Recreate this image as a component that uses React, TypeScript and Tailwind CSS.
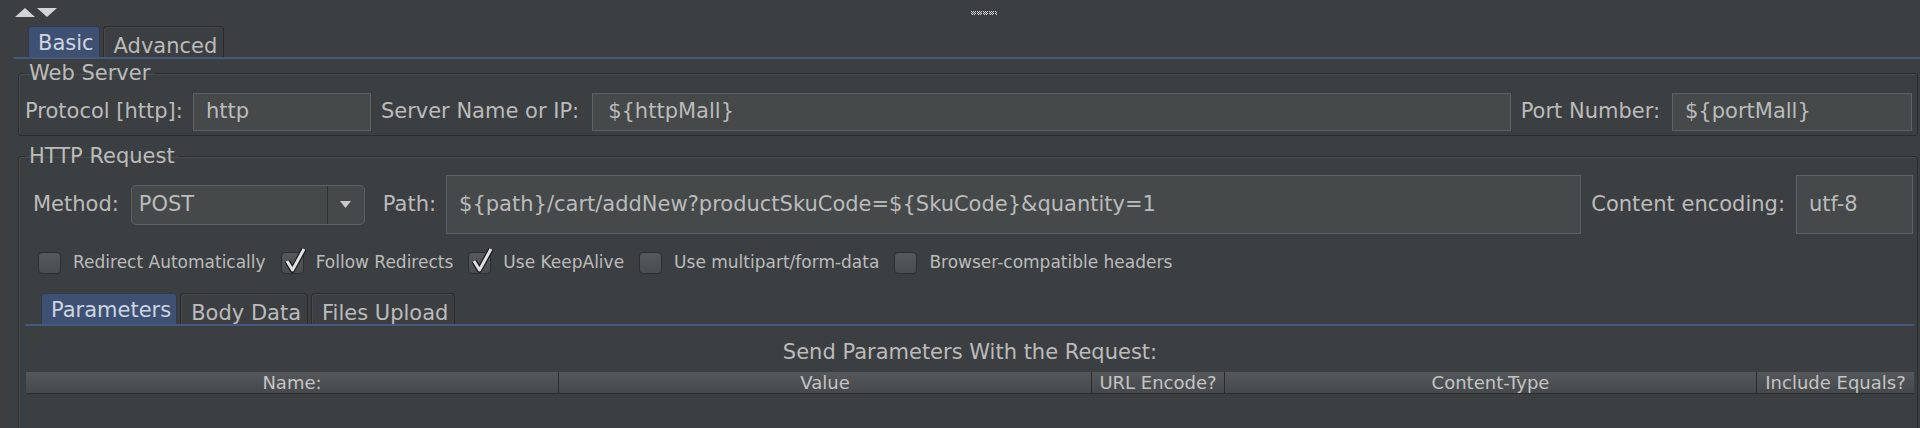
import type { ReactNode } from 'react';

function Tab({ label, active }: { label: string; active?: boolean }) {
  if (active) {
    return (
      <div className="flex h-full items-start rounded-t-[4px] border border-b-0 border-[#2f3a4c] bg-[#3f5173] pl-[9px] pr-[5px] pt-[1px] text-[#cdd5e0]">
        {label}
      </div>
    );
  }
  return (
    <div className="flex h-full items-start rounded-t-[4px] border border-b-0 border-[#2a2c2e] bg-[#3c3f41] pl-[10px] pr-[6px] pt-[4px] shadow-[inset_1px_1px_0_#47494b]">
      {label}
    </div>
  );
}

function Field({ value, className }: { value: string; className?: string }) {
  return (
    <div
      className={
        'flex items-center border border-[#5f6264] bg-[#45494a] pl-[12px] text-[#bbbbbb] ' +
        (className ?? '')
      }
    >
      {value}
    </div>
  );
}

function Checkbox({ label, checked }: { label: string; checked?: boolean }) {
  return (
    <div className="flex items-center gap-[12px]">
      <span className="relative h-[22px] w-[23px] rounded-[4px] border border-[#2c2e30] bg-gradient-to-b from-[#55595b] to-[#4a4d4f]">
        {checked && (
          <svg className="absolute -top-[7px] left-[1px]" width="24" height="28" viewBox="0 0 24 28">
            <path d="M4 15 L9.5 24 L21 3" fill="none" stroke="#1b1c1d" strokeWidth="5.5" strokeLinejoin="round" />
            <path d="M4 15 L9.5 24 L21 3" fill="none" stroke="#e0e0e0" strokeWidth="3" strokeLinejoin="round" />
          </svg>
        )}
      </span>
      <span>{label}</span>
    </div>
  );
}

function Group({ title, className, children }: { title: string; className?: string; children: ReactNode }) {
  return (
    <fieldset
      className={
        'rounded-[3px] border border-[#2b2d2f] shadow-[inset_1px_1px_0_#4a4d4f] ' + (className ?? '')
      }
    >
      <legend className="ml-[6px] px-[4px] leading-[24px]">{title}</legend>
      {children}
    </fieldset>
  );
}

function Grip() {
  const cells: ReactNode[] = [];
  for (let x = 0; x < 26; x++) {
    for (let y = 0; y < 4; y++) {
      if ((x + y) % 2 === 0 && x % 6 !== 5) {
        cells.push(<rect key={x + '-' + y} x={x} y={y} width="1" height="1" fill="#d8d8d8" />);
      }
    }
  }
  return (
    <svg width="26" height="4" viewBox="0 0 26 4">
      {cells}
    </svg>
  );
}

export default function App() {
  return (
    <div className="h-[428px] w-full overflow-hidden bg-[#3c3f41] font-['DejaVu_Sans',sans-serif] text-[21px] text-[#bbbbbb]">
      {/* top splitter bar */}
      <div className="flex h-[26px] items-start">
        <svg className="ml-[15px] mt-[8px]" width="42" height="10" viewBox="0 0 42 10">
          <polygon points="0,9 10,0 20,9" fill="#d2d3d4" />
          <polygon points="22,0 42,0 32,9" fill="#d2d3d4" />
        </svg>
        <div className="ml-[914px] mt-[11px]">
          <Grip />
        </div>
      </div>

      {/* Basic / Advanced tabs */}
      <div className="flex h-[31px] items-end gap-[3px] pl-[28px]">
        <Tab label="Basic" active />
        <Tab label="Advanced" />
      </div>

      <div className="ml-[13px] h-full border-l border-t-2 border-l-[#34404f] border-t-[#46597c] pl-[4px] pr-[2px]">
        <Group title="Web Server" className="mt-[2px]">
          <div className="mb-[4px] mt-[8px] flex h-[38px] items-center pl-[6px] pr-[5px]">
            <span className="mr-[10px]">Protocol [http]:</span>
            <Field value="http" className="h-[38px] w-[178px]" />
            <span className="ml-[10px] mr-[13px]">Server Name or IP:</span>
            <Field value="${httpMall}" className="h-[38px] flex-1 pl-[15px]" />
            <span className="ml-[10px] mr-[12px]">Port Number:</span>
            <Field value="${portMall}" className="h-[38px] w-[240px]" />
          </div>
        </Group>

        <Group title="HTTP Request" className="mt-[8px]">
          <div className="mt-[7px] flex h-[59px] items-center pl-[14px] pr-[4px]">
            <span className="mr-[12px]">Method:</span>
            <div className="flex h-[40px] w-[234px] items-center rounded-[5px] border border-[#5d6062] bg-[#45494a]">
              <span className="flex-1 pl-[7px] leading-none">POST</span>
              <span className="flex h-full w-[37px] items-center justify-center border-l border-[#2f3133]">
                <svg width="11" height="7" viewBox="0 0 11 7">
                  <polygon points="0,0 11,0 5.5,7" fill="#c8c8c8" />
                </svg>
              </span>
            </div>
            <span className="ml-[18px] mr-[10px]">Path:</span>
            <Field
              value="${path}/cart/addNew?productSkuCode=${SkuCode}&quantity=1"
              className="h-[59px] flex-1"
            />
            <span className="ml-[10px] mr-[11px]">Content encoding:</span>
            <Field value="utf-8" className="h-[59px] w-[117px] pl-[11px]" />
          </div>

          <div className="mt-[18px] flex h-[22px] items-center gap-[15px] pl-[19px] text-[17px]">
            <Checkbox label="Redirect Automatically" />
            <Checkbox label="Follow Redirects" checked />
            <Checkbox label="Use KeepAlive" checked />
            <Checkbox label="Use multipart/form-data" />
            <Checkbox label="Browser-compatible headers" />
          </div>

          {/* Parameters / Body Data / Files Upload */}
          <div className="ml-[6px] mr-[2px] mt-[19px]">
            <div className="flex h-[31px] items-end gap-[3px] pl-[16px]">
              <Tab label="Parameters" active />
              <Tab label="Body Data" />
              <Tab label="Files Upload" />
            </div>
            <div className="h-[200px] border-l border-r border-t-2 border-l-[#34404f] border-r-[#34404f] border-t-[#46597c]">
              <div className="mt-[14px] text-center leading-[24px]">Send Parameters With the Request:</div>
              <div className="mt-[8px] flex h-[22px] border-b border-[#2a2c2e] bg-gradient-to-b from-[#54585a] to-[#46494b] text-[18px] leading-[22px] text-[#c4c4c4]">
                <div className="w-[533px] border-r border-[#2a2c2e] text-center">Name:</div>
                <div className="w-[533px] border-r border-[#2a2c2e] text-center">Value</div>
                <div className="w-[133px] border-r border-[#2a2c2e] text-center">URL Encode?</div>
                <div className="w-[532px] border-r border-[#2a2c2e] text-center">Content-Type</div>
                <div className="flex-1 whitespace-nowrap text-center">Include Equals?</div>
              </div>
            </div>
          </div>
        </Group>
      </div>
    </div>
  );
}
